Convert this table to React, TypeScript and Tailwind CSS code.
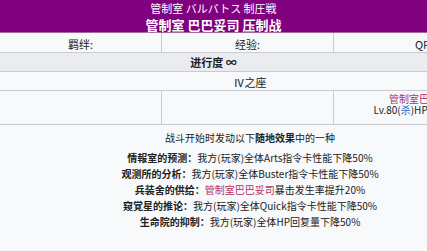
import React from 'react';

const effects = [
  { name: '情報室的预测：', text: '我方(玩家)全体Arts指令卡性能下降50%' },
  { name: '观测所的分析：', text: '我方(玩家)全体Buster指令卡性能下降50%' },
  { name: '兵装舍的供给：', red: '管制室巴巴妥司', text: '暴击发生率提升20%' },
  { name: '窥覚星的推论：', text: '我方(玩家)全体Quick指令卡性能下降50%' },
  { name: '生命院的抑制：', text: '我方(玩家)全体HP回复量下降50%' },
];

const App: React.FC = () => {
  return (
    <div
      className="w-[427px] h-[251px] overflow-hidden bg-[#f8f9fa] text-[#202122]"
      style={{ fontFamily: '"Noto Sans CJK SC", "Noto Sans", sans-serif' }}
    >
      {/* Title */}
      <div className="h-[33px] bg-[#800080] text-white flex flex-col items-center border-b border-[#a2689c]">
        <div className="text-[11px] leading-[14px] pt-[1px]">管制室 バルバトス 制圧戦</div>
        <div className="text-[13px] leading-[17px] font-bold pt-[1px]">管制室 巴巴妥司 压制战</div>
      </div>

      {/* Rewards */}
      <div className="w-[514px] grid grid-cols-[162px_172px_180px] h-[20px] text-[11px] border-b border-[#c8ccd1]">
        <div className="flex items-center justify-center pt-[3px] border-r border-[#c8ccd1]">羁绊:</div>
        <div className="flex items-center justify-center pt-[3px] border-r border-[#c8ccd1]">经验:</div>
        <div className="flex items-center justify-center pt-[3px]">QP:</div>
      </div>

      {/* Progress */}
      <div className="h-[19px] bg-[#eaecf0] border-b border-[#c8ccd1] flex items-center justify-center text-[11px] font-bold">
        进行度 ∞
      </div>

      {/* Stage */}
      <div className="w-[500px] h-[19px] border-b border-[#c8ccd1] flex items-center justify-center text-[11px] pt-[2px]">
        Ⅳ之座
      </div>

      {/* Enemies */}
      <div className="w-[514px] grid grid-cols-[162px_172px_180px] h-[34px] text-[10px] border-b border-[#c8ccd1]">
        <div className="border-r border-[#c8ccd1]"></div>
        <div className="border-r border-[#c8ccd1]"></div>
        <div className="flex flex-col items-center pt-[2px] leading-[11px]">
          <span className="text-[#b3305f]">管制室巴巴妥司</span>
          <span className="whitespace-nowrap">
            Lv.80(<span className="text-[#3366cc]">杀</span>)HP 1,234,567
          </span>
        </div>
      </div>

      {/* Field effects */}
      <div className="w-[500px] flex flex-col items-center pt-[5px] text-[10px] leading-[16px]">
        <div className="mb-[4px]">
          战斗开始时发动以下<span className="font-bold">随地效果</span>中的一种
        </div>
        {effects.map((e) => (
          <div key={e.name} className="whitespace-nowrap">
            <span className="font-bold">{e.name}</span>
            {e.red && <span className="text-[#b3305f]">{e.red}</span>}
            {e.text}
          </div>
        ))}
      </div>
    </div>
  );
};

export default App;
